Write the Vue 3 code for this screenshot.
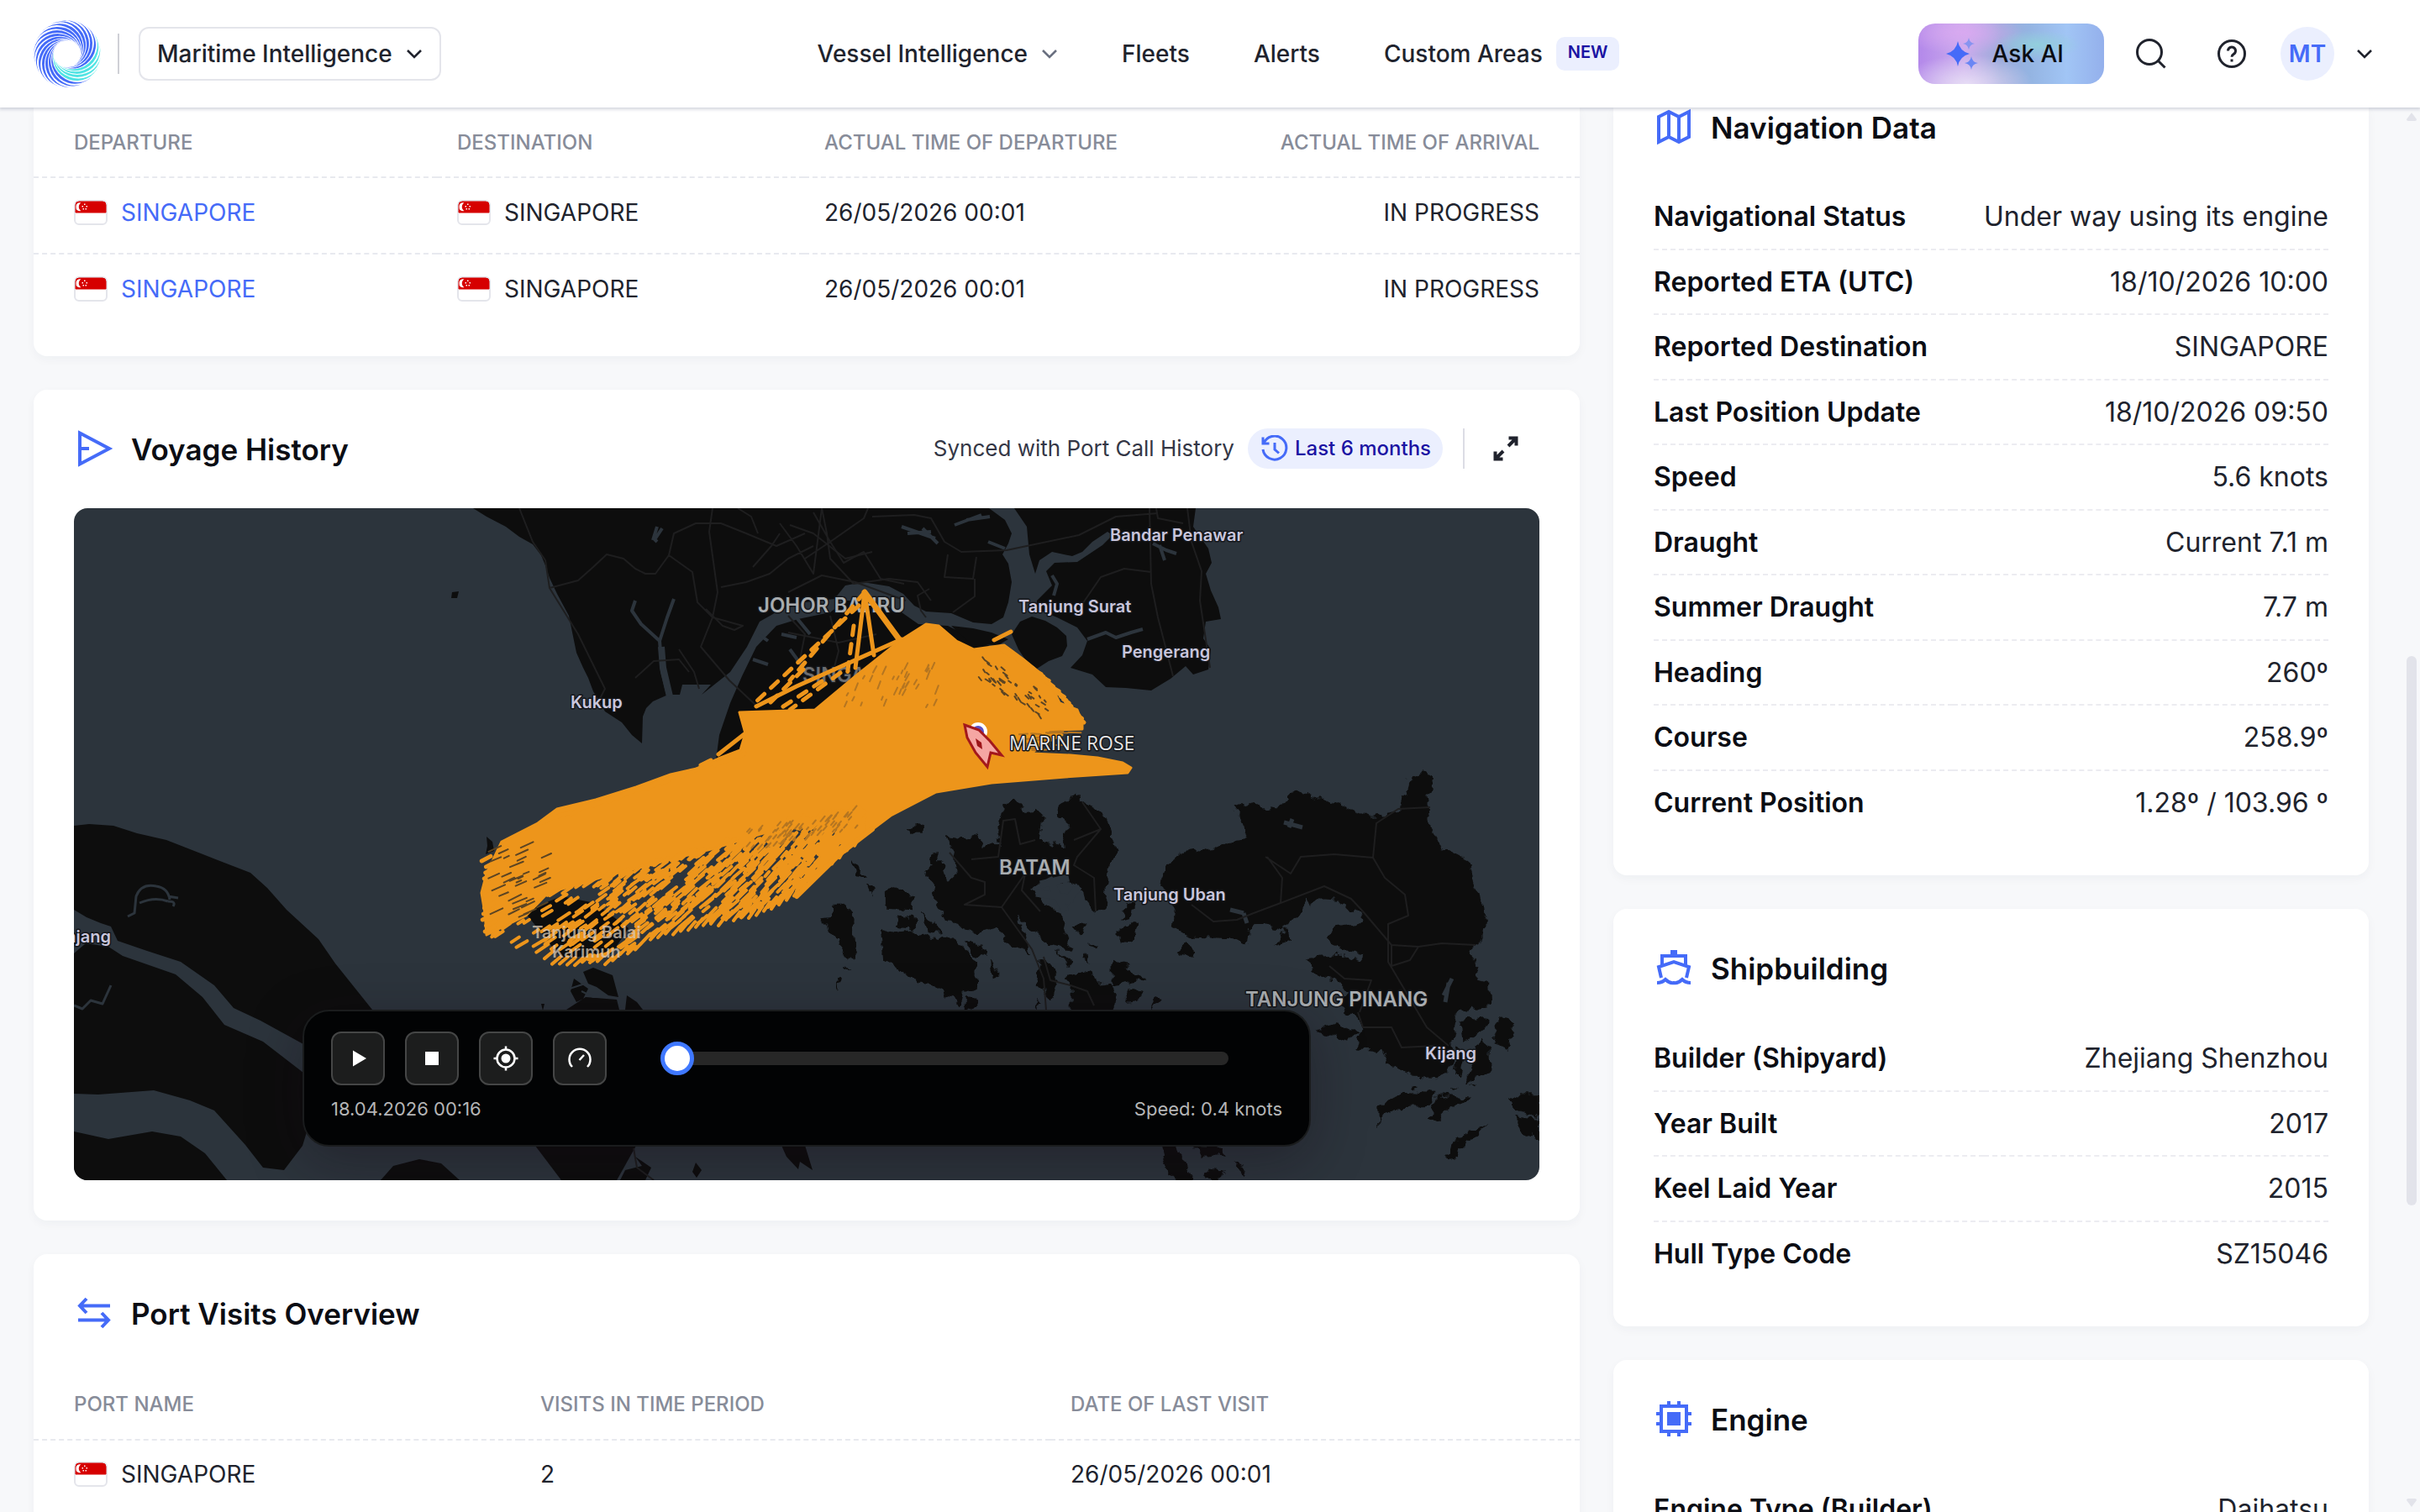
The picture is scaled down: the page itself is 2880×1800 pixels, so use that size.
<script setup>
import { ref } from 'vue'

const product = ref('maritime')
const progress = ref(0)

const logoArms = Array.from({ length: 18 }, (_, i) => {
  const angle = i * 20
  return { angle, teal: angle === 320 || angle === 340 || angle === 0 || angle === 20 }
})

const voyages = [
  { from: 'SINGAPORE', to: 'SINGAPORE', departed: '26/05/2026 00:01', arrived: 'IN PROGRESS' },
  { from: 'SINGAPORE', to: 'SINGAPORE', departed: '26/05/2026 00:01', arrived: 'IN PROGRESS' }
]
const visits = [{ port: 'SINGAPORE', count: 2, last: '26/05/2026 00:01' }]

const navigation = [
  ['Navigational Status', 'Under way using its engine'],
  ['Reported ETA (UTC)', '18/10/2026 10:00'],
  ['Reported Destination', 'SINGAPORE'],
  ['Last Position Update', '18/10/2026 09:50'],
  ['Speed', '5.6 knots'],
  ['Draught', 'Current 7.1 m'],
  ['Summer Draught', '7.7 m'],
  ['Heading', '260º'],
  ['Course', '258.9º'],
  ['Current Position', '1.28º / 103.96 º']
]
const shipbuilding = [
  ['Builder (Shipyard)', 'Zhejiang Shenzhou'],
  ['Year Built', '2017'],
  ['Keel Laid Year', '2015'],
  ['Hull Type Code', 'SZ15046']
]
const engine = [['Engine Type (Builder)', 'Daihatsu']]

/* Seeded generator, so that the track texture is the same on every load */
let seed = 7
function rnd() {
  seed = (seed * 16807) % 2147483647
  return seed / 2147483647
}
function dash(x, y, len, deg) {
  const a = (deg * Math.PI) / 180
  return `M${x.toFixed(1)} ${y.toFixed(1)}l${(Math.cos(a) * len).toFixed(1)} ${(Math.sin(a) * len).toFixed(1)}`
}
function lineAt(line, x) {
  for (let i = 1; i < line.length; i++) {
    const [x1, y1] = line[i]
    const [x0, y0] = line[i - 1]
    if (x <= x1) return y0 + ((y1 - y0) * (x - x0)) / (x1 - x0)
  }
  return line[line.length - 1][1]
}
/* Where the solid track area ends, and how far the single track marks reach */
const solidEdge = [[491, 508], [538, 485], [564, 458], [640, 436], [758, 406], [850, 378], [930, 366], [972, 366]]
const outerEdge = [[491, 508], [540, 530], [574, 541], [640, 539], [665, 524], [691, 508], [803, 486], [849, 468], [911, 414], [972, 368]]
let marks = ''
for (let i = 0; i < 820; i++) {
  const x = 494 + Math.sqrt(rnd()) * 440
  const top = lineAt(solidEdge, x)
  const y = top + (lineAt(outerEdge, x) - top) * Math.pow(rnd(), 1.1)
  marks += dash(x, y, 7 + rnd() * 10, -34 - (x - 494) * 0.05 + rnd() * 8)
}
for (let x = 560; x < 930; x += 9) {
  marks += dash(x, lineAt(outerEdge, x) - 2 + rnd() * 6, 13, -40 - (x - 560) * 0.06)
}
let gaps = ''
for (let i = 0; i < 34; i++) {
  gaps += dash(492 + rnd() * 66, 404 + rnd() * 90, 6 + rnd() * 12, -27 + rnd() * 5)
}
for (let i = 0; i < 46; i++) {
  const x = 1076 + rnd() * 80
  gaps += dash(x, 172 + (x - 1076) * 0.6 + rnd() * 30, 2 + rnd() * 5, 30 + rnd() * 30)
}
let fineGaps = ''
for (let i = 0; i < 36; i++) {
  fineGaps += dash(915 + rnd() * 110, 190 + rnd() * 48, 3 + rnd() * 8, -70 + rnd() * 12)
}
for (let i = 0; i < 70; i++) {
  const x = 800 + rnd() * 130
  fineGaps += dash(x, 385 - (x - 800) * 0.2 + rnd() * 24, 3 + rnd() * 5, -50)
}
for (let i = 0; i < 26; i++) {
  fineGaps += dash(1120 + rnd() * 66, 266 + rnd() * 24, 5 + rnd() * 10, -6 + rnd() * 12)
}
let fringe = ''
for (let i = 0; i <= 30; i++) {
  const t = i / 30
  fringe += dash(1104 + t * 92, 168 + t * 82 - Math.sin(t * 3.1) * 10, 8, 25 + rnd() * 20)
}
for (let i = 0; i <= 26; i++) {
  const t = i / 26
  fringe += dash(555 + t * 235, 374 - t * 80 + rnd() * 3, 9, -25)
}
for (let i = 0; i <= 12; i++) {
  fringe += dash(485 + rnd() * 6, 420 + i * 7, 12, -28)
}
</script>

<template>
  <div class="page">
    <header class="topbar">
      <div class="brand">
        <a href="#" class="logo" aria-label="Home">
          <svg viewBox="-40 -40 80 80">
            <path
              v-for="arm in logoArms"
              :key="arm.angle"
              d="M40 0A28 28 0 0 1 -16 0A28 25 0 0 0 40 0Z"
              :transform="`rotate(${arm.angle})`"
              :fill="arm.teal ? '#4fe3e3' : '#456bf8'"
            />
          </svg>
        </a>
        <span class="brand-line"></span>
        <div class="product">
          <select v-model="product" aria-label="Product">
            <option value="maritime">Maritime Intelligence</option>
          </select>
          <svg class="chevron" viewBox="0 0 20 20"><path d="M2 6l8 8 8-8" /></svg>
        </div>
      </div>

      <nav class="menu">
        <a href="#">Vessel Intelligence <svg class="chevron soft" viewBox="0 0 20 20"><path d="M2 6l8 8 8-8" /></svg></a>
        <a href="#">Fleets</a>
        <a href="#">Alerts</a>
        <a href="#">Custom Areas <span class="new">NEW</span></a>
      </nav>

      <div class="tools">
        <button class="ask" type="button">
          <svg viewBox="0 0 40 40">
            <path d="M15 5q2 12 14 15q-12 3-14 15q-2-12-14-15q12-3 14-15z" fill="#456bf8" />
            <path d="M28 1q1 6 7 7q-6 1-7 7q-1-6-7-7q6-1 7-7z" fill="#8794f0" />
            <path d="M31 23q1 7 8 8q-7 1-8 8q-1-7-8-8q7-1 8-8z" fill="#6a86f4" />
          </svg>
          Ask AI
        </button>
        <button class="icon-btn" type="button" aria-label="Search">
          <svg viewBox="0 0 40 40"><circle cx="18" cy="18" r="14.5" /><path d="M28.500 28.500L36.500 36.500" /></svg>
        </button>
        <button class="icon-btn" type="button" aria-label="Help">
          <svg viewBox="0 0 40 40">
            <circle cx="20" cy="20" r="15.500" />
            <path d="M15.500 16.500a4.500 4.500 0 1 1 6.800 3.900q-2.300 1.400-2.300 3.400" />
            <path d="M20 26.500v3" />
          </svg>
        </button>
        <button class="account" type="button" aria-label="Account">
          <span class="avatar">MT</span>
          <svg class="chevron" viewBox="0 0 20 20"><path d="M2 6l8 8 8-8" /></svg>
        </button>
      </div>
    </header>

    <main class="content">
      <div class="column">
        <section class="card cut">
          <table class="grid voyages">
            <thead>
              <tr>
                <th scope="col">DEPARTURE</th>
                <th scope="col">DESTINATION</th>
                <th scope="col">ACTUAL TIME OF DEPARTURE</th>
                <th scope="col">ACTUAL TIME OF ARRIVAL</th>
              </tr>
            </thead>
            <tbody>
              <tr v-for="(v, i) in voyages" :key="i">
                <td>
                  <div class="port">
                    <svg class="flag" viewBox="0 0 40 30"><use href="#sg-flag" /></svg>
                    <a href="#">{{ v.from }}</a>
                  </div>
                </td>
                <td>
                  <div class="port">
                    <svg class="flag" viewBox="0 0 40 30"><use href="#sg-flag" /></svg>
                    {{ v.to }}
                  </div>
                </td>
                <td>{{ v.departed }}</td>
                <td>{{ v.arrived }}</td>
              </tr>
            </tbody>
          </table>
        </section>

        <section class="card voyage">
          <div class="head">
            <svg class="head-icon" viewBox="0 0 48 48">
              <path d="M7 5.500L42 24L7 42.500ZM7 24H18" />
            </svg>
            <h2>Voyage History</h2>
            <div class="head-tools">
              <span class="synced">Synced with Port Call History</span>
              <span class="pill">
                <svg viewBox="0 0 32 32">
                  <path d="M2 2.500v7.500h7.500M2.800 10A14 14 0 1 1 2 17M16 9v8l5 4.500" />
                </svg>
                Last 6 months
              </span>
              <span class="head-line"></span>
              <button class="expand" type="button" aria-label="Expand map">
                <svg viewBox="0 0 32 32">
                  <path d="M19.500 3.500H28.500V12.500M28 4L19 13M3.500 19.500V28.500H12.500M4 28L13 19" />
                </svg>
              </button>
            </div>
          </div>

          <div class="map">
            <svg class="chart" viewBox="0 0 1744 800" preserveAspectRatio="xMidYMid slice">
              <filter id="coast" x="0" y="0" width="100%" height="100%">
                <feTurbulence type="fractalNoise" baseFrequency="0.09" numOctaves="2" seed="4" />
                <feDisplacementMap in="SourceGraphic" scale="13" xChannelSelector="R" yChannelSelector="G" />
              </filter>
              <g class="land">
                <path d="M475 0L491 10L514 22L530 34L546 43L556 56L561 68L566 83L575 102L589 128L598 172L606 190L612 202L618 218L632 242L652 255L664 270L676 280L677 248L681 238L689 230L707 222L721 222L724 210L758 210L747 222L781 195L801 165L816 135L839 122L870 112L905 108L918 92L939 88L970 93L987 102L1000 116L1014 123L1044 125L1070 136L1092 138L1106 130L1112 112L1116 88L1112 66L1105 55L1112 42L1116 30L1108 14L1089 0Z" />
                <path d="M781 232L795 200L812 165L836 140L862 132L900 124L918 110L950 110L985 124L1005 138L1040 140L1070 155L1092 165L1060 200L960 300L790 300L764 300L768 270Z" />
                <path d="M1044 140L1070 143L1092 148L1112 156L1100 163L1068 162Z" />
                <path d="M1126 135L1140 129L1156 134L1170 142L1181 152L1182 164L1176 176L1160 182L1146 191L1132 180L1124 168L1116 150Z" />
                <path d="M1119 0L1134 22L1137 55L1144 78L1149 62L1164 52L1188 57L1200 52L1212 40L1230 28L1236 32L1224 44L1212 52L1194 64L1167 65L1157 75L1164 92L1156 100L1146 110L1146 120L1170 130L1194 142L1206 158L1200 175L1186 190L1212 198L1228 213L1252 214L1282 217L1305 203L1323 188L1332 198L1350 192L1353 168L1344 155L1347 135L1365 132L1362 118L1353 98L1347 78L1354 65L1350 48L1332 22L1335 0Z" />
                <path d="M0 378L18 376L47 378L75 387L110 395L156 413L210 434L230 452L253 478L291 513L311 542L331 567L355 597L374 622L340 660L273 638L222 610L190 595L167 568L127 540L87 527L52 515L44 498L32 494L15 487L0 478Z" />
                <path d="M0 530L14 518L41 522L58 533L121 555L153 582L179 615L225 635L273 672L290 700L272 759L250 788L225 785L204 758L167 717L138 705L95 693L29 698L0 697Z" />
                <path d="M0 742L41 751L93 742L127 748L156 768L182 800L0 800Z" />
                <path d="M365 800L380 783L411 775L437 780L459 800Z" />
                <path d="M549 759L580 800L646 800L669 759Z" />
                <path d="M668 772L687 785L680 800L650 800L656 788L676 783ZM740 779L747 788L741 797L736 790ZM839 752H868L879 788L864 778L862 787L848 772Z" />
                <path d="M606 552L618 547L641 556L648 582L636 580L622 570L612 566ZM595 560L612 572L606 584L598 588L591 575ZM586 597L609 582L646 585L649 597ZM658 580L670 588L677 597H656Z" />
                <path d="M491 391L498 397L500 408L490 412L492 402ZM450 100L458 99L456 107L449 107ZM556 590L560 590L558 598Z" />
                <path d="M536 480L580 462L620 470L660 500L640 530L580 536Z" />
              </g>
              <g filter="url(#coast)">
                <path d="M0 0H1744V800H0Z" fill="none" />
                <g class="land" transform="translate(852 355) scale(.5995 .3333)">
                  <path d="M310 105L345 118L370 98L385 140L405 130L420 150L412 90L425 0L445 -25L465 15L490 12L505 40L498 120L530 135L545 150L542 100L558 75L530 30L535 -20L570 -40L600 0L630 35L640 110L648 160L632 220L628 300L625 355L610 385L600 370L585 330L575 280L520 260L480 290L505 350L540 380L545 440L562 520L540 505L515 490L480 440L450 392L470 470L480 525L440 500L410 430L370 455L310 410L290 340L285 280L265 230L300 190L310 260L330 250L325 170Z" />
                  <path d="M180 440L215 455L245 440L290 475L310 460L350 510L372 560L370 650L345 665L340 710L300 660L230 600L185 540ZM90 350L105 350L125 380L130 540L115 545L95 470L60 400L85 395ZM190 300L215 285L245 330L240 370L190 365ZM215 395L250 400L250 440L210 430ZM265 380L300 450L275 455ZM125 195L150 248L130 240ZM235 75L265 65L265 95L240 95ZM280 170L300 165L295 205L275 210ZM345 480L380 500L390 540L365 530ZM400 545L418 600L405 610ZM105 570L120 575L112 582ZM90 620L97 622L93 650ZM155 280L170 285L162 325Z" />
                  <path d="M495 550L515 560L535 620L520 690L490 640ZM545 620L575 585L605 600L610 635L635 630L650 680L640 735L560 735L560 660ZM640 545L675 560L665 590L710 615L640 645ZM660 690L675 645L700 660L690 695L665 702ZM715 735L725 685L735 690ZM485 735L495 690L500 695ZM350 685L372 690L365 720L350 715ZM560 430L588 410L575 460ZM665 352L688 345L680 400L658 410ZM655 435L690 415L680 475L655 485ZM765 520L785 487L803 510L800 540ZM590 495L610 490L608 505ZM585 530L595 560L580 545ZM530 520L560 560L552 580Z" />
                  <path d="M880 0L925 -15L940 5L965 10L985 -30L1005 -52L1060 -25L1155 35L1210 20L1215 -30L1230 -40L1225 -90L1255 -125L1278 -110L1275 -60L1265 -50L1270 70L1300 150L1345 190L1355 270L1383 380L1375 470L1350 510L1365 580L1363 620L1388 630L1390 710L1350 725L1325 740L1315 840L1318 920L1290 970L1240 965L1185 920L1175 870L1120 865L1130 810L1140 800L1125 760L1090 720L1110 660L1080 620L1035 590L1030 540L1090 530L1130 550L1140 530L1090 510L1070 470L1080 430L1130 420L1140 385L1110 375L1090 335L1045 330L1035 365L1025 325L1010 390L975 440L930 420L915 430L910 490L880 475L800 470L760 430L765 370L740 280L745 220L780 165L850 145L885 120L910 115L900 50Z" />
                  <path d="M1330 770L1350 755L1385 762L1385 790L1335 840ZM1410 760L1438 770L1425 870L1395 840ZM1370 830L1390 860L1392 940L1345 985L1360 880ZM1325 850L1340 880L1330 960L1318 960ZM1045 800L1090 780L1130 805L1105 840L1080 820ZM1170 1145L1168 1070L1220 1020L1280 1025L1275 1070L1210 1075L1175 1110ZM1285 1030L1350 1040L1310 1080L1285 1125L1272 1110ZM1428 1045L1445 1030L1488 1030L1488 1110L1440 1085ZM1438 1105L1488 1115L1488 1190L1450 1160ZM1385 1130L1355 1190L1330 1220L1325 1265L1300 1250L1320 1190ZM985 430L1000 480L965 497ZM1235 1000L1248 1003L1240 1012ZM1312 1005L1322 1010L1316 1016ZM1355 990L1366 985L1358 1000Z" />
                  <path d="M735 1200L770 1215L800 1335L770 1335L745 1290ZM800 1213L850 1220L872 1243L820 1250ZM825 1335L830 1295L860 1300L855 1335ZM880 1270L905 1290L900 1320Z" />
                </g>
              </g>

              <g class="water">
                <path d="M707 222L700 195L697 158L675 138L664 122L668 110M697 158L706 130L714 108" stroke-width="4" />
                <path d="M709 224L701 190L699 165" stroke-width="8" />
                <path d="M689 38L694 22M692 36L700 24M690 36L694 40" stroke-width="4" />
                <path d="M985 22L1025 36M992 30L1020 28M1010 24L1028 42M1048 20L1080 8M1062 14L1090 10M1088 40L1108 48" stroke-width="4" />
                <path d="M815 150L826 158M808 180L826 186M842 150L860 154M852 168L868 190M858 128L876 150" stroke-width="4" />
                <path d="M1284 42L1300 50L1312 54M1292 44L1298 62" stroke-width="4" />
                <path d="M1164 80L1170 90L1166 104M1206 156L1228 148L1240 154L1258 148L1272 144" stroke-width="4" />
                <path d="M64 486L72 482L74 462Q80 446 98 450Q112 452 114 466M78 470Q96 462 112 468M112 462L124 464M112 468Q122 468 118 474M0 592L10 596L20 586L34 590L44 568" stroke-width="3" />
                <path d="M590 572L608 566M604 575L618 582L636 582" stroke-width="2" />
                <path d="M1150 448L1184 440M1145 458L1190 465M1160 440L1180 480M1196 450L1180 470" stroke-width="9" />
                <path d="M1440 374L1462 380M1446 380L1450 370M1376 478L1392 482M1392 482L1396 494M1630 580L1640 560M1632 588L1636 565" stroke-width="5" />
              </g>

              <g class="road">
                <path d="M530 0L546 40L561 62L566 95L600 150L632 215L620 238M566 95L600 86L618 70L634 55L654 60L668 72L680 78L692 78L708 56L714 30L740 18L770 18L800 30L836 45L870 30M708 56L736 76L742 112L760 130L796 140L786 145L772 140L752 120M760 0L756 28L766 100L760 130L746 165L780 205L812 235M770 94L800 88L828 78L850 60L880 45M790 0L806 10L814 30M808 70L830 45L840 30M668 202L690 182L720 180L732 195M720 168L738 195L744 215M840 18L860 45L880 78L890 0M870 60L900 40L916 65L940 52L960 84L988 90M850 100L890 80L930 88L990 110" />
                <path d="M852 20L880 30L918 60L950 52M880 5L900 40L940 12L945 0M950 10L1000 8L1020 12L1036 40L1056 52L1110 50L1196 32L1240 10L1290 6M1040 55L1036 82L1070 84L1074 58M1072 84L1072 105L1046 124M890 0L896 30L900 60L928 90L970 84L1004 88L1020 110M1280 0L1282 90L1290 130L1308 200M1196 120L1222 82L1250 72L1282 76M1288 0L1290 12L1320 18M1325 0L1330 40L1342 75L1340 110L1346 150L1352 190" />
                <path d="M1014 130L1008 122L1004 104L1018 96M850 128L870 150L864 180L880 205M900 128L910 170L902 200M850 148L910 160L955 150" />
                <path d="M1042 410L1068 440L1084 445L1084 460L1060 472L1104 475L1140 525L1154 560L1158 610M1068 418L1100 415L1106 372L1120 370L1126 400L1144 395M1104 475L1132 435L1128 455L1150 480M1190 395L1222 382L1200 350M1222 382L1194 415L1190 425L1214 440L1216 480M1154 534L1162 562L1186 568L1206 575L1214 592" />
                <path d="M1330 472L1356 492L1384 490L1404 482L1436 470L1438 440L1420 415M1418 415L1448 435L1460 415L1500 412L1546 416L1550 375L1576 358L1614 356M1436 470L1488 450L1520 465L1534 480L1568 520L1600 522L1628 518L1668 520M1546 416L1560 440L1584 460L1588 485L1564 495L1564 540L1610 618L1636 640M1494 545L1512 560L1544 562L1530 600M1568 520L1568 545L1590 538L1600 522M1528 600L1534 618L1568 618L1580 642L1620 640M666 762L670 785L690 800" />
              </g>

              <text class="city" x="814" y="124">JOHOR BAHRU</text>
              <text class="city dim" x="867" y="207">SINGAPORE</text>
              <text class="city" x="1101" y="436">BATAM</text>
              <text class="city" x="1394" y="593">TANJUNG PINANG</text>

              <g class="track">
                <path class="area" d="M485 458L491 435L509 397L552 375L575 358L621 347L669 332L710 317L741 310L767 298L793 288L799 268L792 243L882 240L930 200L984 157L1014 138L1029 140L1050 158L1071 168L1107 163L1130 180L1152 198L1165 215L1173 232L1194 240L1200 255L1200 263L1162 264L1176 270L1150 282L1140 292L1186 294L1218 297L1248 303L1258 309L1254 315L1180 320L1092 327L1026 338L972 366L911 412L925 372L850 378L758 406L640 436L564 458L538 485L491 508L489 482Z" />
                <path class="marks" :d="marks" />
                <path class="fringe" :d="fringe" />
                <path class="gaps" :d="gaps" />
                <path class="gaps fine" :d="fineGaps" />
                <path d="M860 462L911 412L950 382" stroke-width="6" />
                <path d="M941 100L982 156" stroke-width="7" />
                <path d="M941 100L930 190M941 100L952 175M812 236L860 212L985 156M799 268L767 293M1115 147L1095 157M758 300L746 306" stroke-width="5" />
                <path d="M941 100L852 205M934 116L808 234M868 192L824 236M912 196L852 240M890 206L838 240M928 140L920 200" stroke-width="5" stroke-dasharray="11 11" />
              </g>

              <g class="town">
                <text x="1233" y="39">Bandar Penawar</text>
                <text x="1124" y="124">Tanjung Surat</text>
                <text x="1247" y="178">Pengerang</text>
                <text x="591" y="238">Kukup</text>
                <text x="1237" y="467">Tanjung Uban</text>
                <text x="1608" y="656">Kijang</text>
                <text x="44" y="517" text-anchor="end">njang</text>
                <g class="faded" text-anchor="middle">
                  <text x="610" y="512">Tanjung Balai</text>
                  <text x="610" y="535">Karimun</text>
                </g>
              </g>

              <circle cx="1076" cy="266" r="9" fill="#5a4fc4" stroke="#fff" stroke-width="4" />
              <path class="ship" d="M1060 258L1077 264L1090 277L1104 294L1091 291L1087 308L1073 291L1063 273Z" />
              <path d="M1073 274L1080 279L1081 287L1075 283Z" fill="#9c1519" />
              <text class="vessel" x="1113" y="288">MARINE ROSE</text>
            </svg>

            <div class="player">
              <div class="controls">
                <button type="button" aria-label="Play"><svg viewBox="0 0 32 32"><path d="M10 6.500L26 16L10 25.500Z" fill="#fff" /></svg></button>
                <button type="button" aria-label="Stop"><svg viewBox="0 0 32 32"><path d="M8 8H24V24H8Z" fill="#fff" /></svg></button>
                <button type="button" aria-label="Centre on vessel">
                  <svg viewBox="0 0 32 32" fill="none" stroke="#fff" stroke-width="2.500">
                    <circle cx="16" cy="16" r="10.500" /><path d="M16 1.500V6M16 26V30.500M1.500 16H6M26 16H30.500" />
                    <circle cx="16" cy="16" r="5.500" fill="#fff" stroke="none" />
                  </svg>
                </button>
                <button type="button" aria-label="Playback speed">
                  <svg viewBox="0 0 32 32" fill="none" stroke="#fff" stroke-width="2.500">
                    <path d="M7 26A12.500 12.500 0 1 1 25 26M15.500 18L21 12" />
                  </svg>
                </button>
                <input v-model="progress" type="range" min="0" max="100" aria-label="Playback position" />
              </div>
              <div class="status"><span>18.04.2026 00:16</span><span>Speed: 0.4 knots</span></div>
            </div>
          </div>
        </section>

        <section class="card flush">
          <div class="head">
            <svg class="head-icon" viewBox="0 0 48 48">
              <path d="M43 15.500H8M15 7L7 15.500L15 24M5 32.500H40M33 24L41 32.500L33 41" />
            </svg>
            <h2>Port Visits Overview</h2>
          </div>
          <table class="grid visits">
            <thead>
              <tr>
                <th scope="col">PORT NAME</th>
                <th scope="col">VISITS IN TIME PERIOD</th>
                <th scope="col">DATE OF LAST VISIT</th>
              </tr>
            </thead>
            <tbody>
              <tr v-for="v in visits" :key="v.port">
                <td>
                  <div class="port">
                    <svg class="flag" viewBox="0 0 40 30"><use href="#sg-flag" /></svg>
                    {{ v.port }}
                  </div>
                </td>
                <td>{{ v.count }}</td>
                <td>{{ v.last }}</td>
              </tr>
            </tbody>
          </table>
        </section>
      </div>

      <div class="column">
        <section class="card cut">
          <div class="head">
            <svg class="head-icon" viewBox="0 0 48 48">
              <path d="M6 12L18 6L30 12L42 6V36L30 42L18 36L6 42ZM18 6V36M30 12V42" />
            </svg>
            <h2>Navigation Data</h2>
          </div>
          <table class="details">
            <tbody>
              <tr v-for="[label, value] in navigation" :key="label">
                <th scope="row">{{ label }}</th>
                <td>{{ value }}</td>
              </tr>
            </tbody>
          </table>
        </section>

        <section class="card">
          <div class="head">
            <svg class="head-icon" viewBox="0 0 48 48">
              <path d="M10 21V10H38V21M9 36L6 23L24 17L42 23L39 36M4 42Q10 42 14 38Q19 43 24 42Q29 43 34 38Q38 42 44 42" />
              <path d="M20 3H28V9H20Z" fill="#456bf8" stroke="none" />
            </svg>
            <h2>Shipbuilding</h2>
          </div>
          <table class="details">
            <tbody>
              <tr v-for="[label, value] in shipbuilding" :key="label">
                <th scope="row">{{ label }}</th>
                <td>{{ value }}</td>
              </tr>
            </tbody>
          </table>
        </section>

        <section class="card">
          <div class="head">
            <svg class="head-icon" viewBox="0 0 48 48">
              <path d="M9 9H39V39H9ZM18 3V9M30 3V9M18 39V45M30 39V45M3 18H9M3 30H9M39 18H45M39 30H45" />
              <path d="M16 16H32V32H16Z" fill="#456bf8" stroke="none" />
            </svg>
            <h2>Engine</h2>
          </div>
          <table class="details">
            <tbody>
              <tr v-for="[label, value] in engine" :key="label">
                <th scope="row">{{ label }}</th>
                <td>{{ value }}</td>
              </tr>
            </tbody>
          </table>
        </section>
      </div>

      <div class="scrollbar" aria-hidden="true">
        <svg viewBox="0 0 12 10"><path d="M6 0L12 8Q12 10 10 10H2Q0 10 0 8Z" /></svg>
        <div class="rail"><span></span></div>
        <svg viewBox="0 0 12 10"><path d="M6 10L12 2Q12 0 10 0H2Q0 0 0 2Z" /></svg>
      </div>
    </main>

    <svg class="defs" aria-hidden="true">
      <symbol id="sg-flag" viewBox="0 0 40 30">
        <rect x="1" y="1" width="38" height="28" rx="5" fill="#fff" />
        <path d="M1 15V6Q1 1 6 1H34Q39 1 39 6V15Z" fill="#d60000" />
        <path d="M8.500 3.500A5 5 0 1 0 8.500 13A5.500 5.500 0 0 1 8.500 3.500Z" fill="#fff" />
        <path d="M12 4.500h1.500v1.500h-1.500zM9.500 7h1.500v1.500h-1.500zM14.500 7h1.500v1.500h-1.500zM10.500 10h1.500v1.500h-1.500zM13.500 10h1.500v1.500h-1.500z" fill="#fff" />
        <rect x="1" y="1" width="38" height="28" rx="5" fill="none" stroke="#e4e5eb" stroke-width="2" />
        <path d="M2 15V6Q2 2 6 2H34Q38 2 38 6V15Z" fill="none" stroke="#d60000" />
      </symbol>
    </svg>
  </div>
</template>

<style>
body {
  background: #f7f8fa;
}
</style>

<style scoped>
.page {
  height: 100vh;
  overflow: hidden;
  display: flex;
  flex-direction: column;
  background: #f7f8fa;
  color: #20232d;
  font-family: Inter, "Liberation Sans", sans-serif;
  font-size: 28px;
  line-height: 40px;
}
.page *,
.page *::before {
  box-sizing: border-box;
}
a {
  color: inherit;
  text-decoration: none;
}
button,
select {
  font: inherit;
  color: inherit;
  border: 0;
  background: none;
  padding: 0;
}
.defs {
  position: absolute;
  width: 0;
  height: 0;
}

.topbar {
  position: relative;
  z-index: 2;
  flex: none;
  height: 128px;
  display: grid;
  grid-template-columns: 1fr auto 1fr;
  align-items: center;
  padding: 0 20px 0 40px;
  background: #fff;
  box-shadow: 0 1px 4px 1px rgba(40, 50, 90, 0.22);
  font-weight: 500;
}
.brand,
.menu,
.tools,
.menu a {
  display: flex;
  align-items: center;
}
.logo,
.logo svg {
  display: block;
  width: 80px;
  height: 80px;
}
.brand-line {
  width: 2px;
  height: 48px;
  margin: 0 23px 0 20px;
  background: #cfd0d6;
}
.product {
  position: relative;
}
.product select {
  appearance: none;
  height: 64px;
  padding: 0 56px 0 20px;
  border: 2px solid #e4e5eb;
  border-radius: 12px;
}
.product .chevron {
  position: absolute;
  right: 22px;
  top: 22px;
  pointer-events: none;
}
.chevron {
  width: 20px;
  height: 20px;
  fill: none;
  stroke: #20232d;
  stroke-width: 2.6;
}
.chevron.soft {
  stroke: #6a7080;
}
.menu {
  gap: 76px;
}
.menu a {
  gap: 16px;
}
.new {
  height: 40px;
  padding: 0 14px;
  border-radius: 10px;
  background: #ebeffe;
  color: #1b13a3;
  font-size: 20px;
  line-height: 36px;
  font-weight: 600;
}
.tools {
  justify-content: flex-end;
  padding-right: 36px;
}
.ask {
  display: flex;
  align-items: center;
  gap: 16px;
  height: 72px;
  padding: 0 48px 0 32px;
  border-radius: 20px;
  color: #0b0d14;
  background:
    radial-gradient(ellipse at 64% 35%, rgba(146, 208, 220, 0.95) 0, transparent 26%),
    radial-gradient(ellipse at 26% 100%, #e6dcf5 0, transparent 34%),
    radial-gradient(ellipse at 24% 15%, #d8a9f0 0, transparent 30%),
    linear-gradient(90deg, #b388ea 0, #cbacec 25%, #9cabdb 44%, #94b4e2 60%, #a1c5f5 80%, #94b0ec 100%);
}
.ask svg {
  width: 40px;
  height: 40px;
}
.icon-btn {
  width: 40px;
  height: 40px;
  margin-left: 36px;
}
.icon-btn + .icon-btn {
  margin-left: 56px;
}
.icon-btn svg {
  display: block;
  fill: none;
  stroke: #20232d;
  stroke-width: 3;
}
.account {
  display: flex;
  align-items: center;
  gap: 26px;
  margin-left: 38px;
}
.avatar {
  width: 64px;
  height: 64px;
  border-radius: 50%;
  background: #ebeffe;
  color: #456bf8;
  line-height: 64px;
  font-weight: 600;
}

.content {
  position: relative;
  flex: 1;
  min-height: 0;
  overflow: hidden;
  display: grid;
  grid-template-columns: 1840fr 899fr;
  align-items: start;
  gap: 40px;
  padding: 0 61px 0 40px;
}
.column {
  display: flex;
  flex-direction: column;
  gap: 40px;
  min-width: 0;
}
.card {
  padding: 46px 48px 48px;
  border-radius: 16px;
  background: #fff;
  box-shadow: 0 4px 12px rgba(30, 40, 70, 0.04);
}
.card.cut {
  padding-top: 0;
  border-radius: 0 0 16px 16px;
}
.card.cut:has(.grid),
.card.flush {
  padding-left: 0;
  padding-right: 0;
  padding-bottom: 32px;
}
.head {
  display: flex;
  align-items: center;
  gap: 20px;
  height: 48px;
  margin-bottom: 46px;
}
.cut .head {
  height: 46px;
}
.flush .head {
  padding: 0 48px;
  margin-bottom: 44px;
}
.head-icon {
  flex: none;
  width: 48px;
  height: 48px;
  fill: none;
  stroke: #456bf8;
  stroke-width: 4;
}
h2 {
  margin: 2px 0 0;
  color: #0b0d14;
  font-size: 35px;
  line-height: 44px;
  font-weight: 600;
}
.head-tools {
  display: flex;
  align-items: center;
  margin-left: auto;
}
.synced {
  color: #343746;
  font-size: 26px;
}
.pill {
  display: flex;
  align-items: center;
  gap: 8px;
  height: 48px;
  margin-left: 16px;
  padding: 0 14px 0 16px;
  border-radius: 24px;
  background: #ebeffe;
  color: #1b13a3;
  font-size: 24px;
  font-weight: 500;
}
.pill svg {
  width: 32px;
  height: 32px;
  fill: none;
  stroke: #456bf8;
  stroke-width: 3;
}
.head-line {
  width: 2px;
  height: 48px;
  margin: 0 33px 0 24px;
  background: #dcdde5;
}
.expand {
  width: 32px;
  height: 32px;
  margin-right: 24px;
}
.expand svg {
  display: block;
  fill: none;
  stroke: #20232d;
  stroke-width: 4;
}

.grid,
.details {
  width: 100%;
  border-collapse: separate;
  border-spacing: 0;
}
.grid {
  table-layout: fixed;
}
.grid th,
.grid td {
  border-bottom: 2px dashed #e8e9ef;
  text-align: left;
}
.grid th {
  padding: 25px 24px;
  color: #878c99;
  font-size: 24px;
  line-height: 32px;
  font-weight: 500;
}
.voyages th {
  padding: 26px 24px 24px;
}
.grid td {
  padding: 21px 24px 28px;
}
.grid tr > :first-child {
  padding-left: 48px;
}
.grid tr > :last-child {
  padding-right: 48px;
}
.grid tbody tr:last-child td {
  border-bottom: 0;
}
.voyages th:nth-child(1) {
  width: 480px;
}
.voyages th:nth-child(2) {
  width: 437px;
}
.voyages th:nth-child(3) {
  width: 462px;
}
.voyages tr > :last-child {
  text-align: right;
}
.visits th:nth-child(1) {
  width: 579px;
}
.visits th:nth-child(2) {
  width: 631px;
}
.visits td {
  padding-top: 20px;
}
.port {
  display: flex;
  align-items: center;
  gap: 16px;
}
.port a {
  color: #456bf8;
}
.flag {
  width: 40px;
  height: 30px;
}

.details {
  font-size: 32px;
}
.details th,
.details td {
  padding: 18px 0;
  border-bottom: 2px dashed #ececf1;
}
.details tr:nth-child(even) > * {
  padding-bottom: 17px;
}
.details th {
  color: #0b0d14;
  font-weight: 600;
  text-align: left;
}
.details td {
  text-align: right;
}
.details tr:last-child > * {
  padding-bottom: 18px;
  border-bottom: 0;
}

.map {
  position: relative;
  height: 800px;
  overflow: hidden;
  border-radius: 16px;
  background: #2c343c;
}
.voyage .head {
  margin-bottom: 47px;
}
.chart {
  display: block;
  width: 100%;
  height: 100%;
}
.land {
  fill: #0d0d0d;
}
.water path,
.road path {
  fill: none;
  stroke: #2c343c;
  stroke-linejoin: round;
}
.road path {
  stroke: #1e1e1f;
  stroke-width: 2;
}
.track path {
  fill: none;
  stroke: #ed951b;
  stroke-linecap: round;
}
.track .area {
  fill: #ed951b;
  stroke-width: 3;
  stroke-linejoin: round;
}
.track .fringe {
  stroke-width: 5;
}
.track .marks {
  stroke-width: 4;
}
.track .gaps {
  stroke: #5b4423;
  stroke-width: 2;
}
.track .fine {
  stroke: #b47521;
}
.chart text {
  paint-order: stroke;
  stroke: #14161a;
  stroke-width: 3;
  stroke-linejoin: round;
}
.city {
  fill: #a9adb0;
  font-size: 24px;
  font-weight: 600;
}
.city.dim {
  fill: #6b6d70;
}
.town text {
  fill: #c9c6dd;
  font-size: 20px;
  font-weight: 600;
}
.town .faded text {
  fill: #d8c9b8;
  fill-opacity: 0.75;
  stroke: none;
}
.vessel {
  fill: #e4e4e4;
  font-family: "Open Sans", sans-serif;
  font-size: 23px;
}
.ship {
  fill: #f5a6a3;
  stroke: #a3181c;
  stroke-width: 3;
}

.player {
  position: absolute;
  left: 0;
  right: 0;
  bottom: 40px;
  width: 1200px;
  max-width: 100%;
  margin: 0 auto;
  padding: 24px 32px 27px;
  border: 2px solid #1a1c1d;
  border-radius: 32px;
  background: #020304;
  box-shadow: 0 16px 64px rgba(20, 10, 20, 0.35);
}
.controls {
  display: flex;
  align-items: center;
  gap: 24px;
}
.controls button {
  display: grid;
  place-items: center;
  flex: none;
  width: 64px;
  height: 64px;
  border: 2px solid #454646;
  border-radius: 12px;
  background: #1c1d1d;
}
.controls svg {
  width: 32px;
  height: 32px;
}
.controls input {
  appearance: none;
  flex: 1;
  min-width: 0;
  height: 40px;
  margin: 0 64px 0 40px;
  background: none;
}
.controls input::-webkit-slider-runnable-track {
  height: 16px;
  border-radius: 8px;
  background: #272727;
}
.controls input::-webkit-slider-thumb {
  appearance: none;
  width: 40px;
  height: 40px;
  margin-top: -12px;
  border: 5px solid #3f78ff;
  border-radius: 50%;
  background: #fff;
}
.status {
  display: flex;
  justify-content: space-between;
  margin-top: 12px;
  color: #b4b5b6;
  font-size: 22px;
  line-height: 32px;
}

.scrollbar {
  position: absolute;
  top: 6px;
  right: 4px;
  bottom: 6px;
  width: 12px;
  display: flex;
  flex-direction: column;
}
.scrollbar svg {
  width: 12px;
  height: 10px;
  fill: #e2e3ea;
}
.rail {
  flex: 1;
  display: flex;
  flex-direction: column;
}
.rail::before {
  content: "";
  flex: 637;
}
.rail::after {
  content: "";
  flex: 349;
}
.rail span {
  flex: 654;
  border-radius: 6px;
  background: #e2e3ea;
}
</style>
